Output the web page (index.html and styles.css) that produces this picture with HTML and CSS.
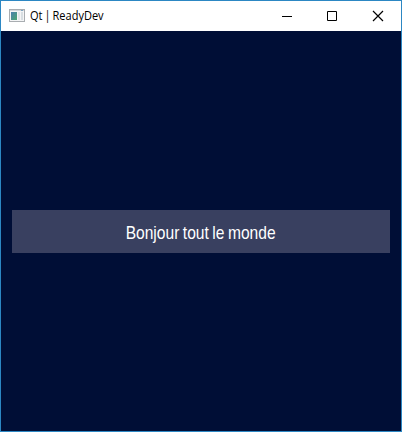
FILE: index.html
```html
<!DOCTYPE html>
<html lang="fr">
<head>
<meta charset="utf-8">
<title>Qt | ReadyDev</title>
<link rel="stylesheet" href="styles.css">
</head>
<body>
<div class="window">
  <header class="titlebar">
    <svg class="app-icon" width="16" height="14" viewBox="0 0 16 14" shape-rendering="crispEdges">
      <defs>
        <linearGradient id="pane" x1="0" y1="0" x2="1" y2="1">
          <stop offset="0" stop-color="#4b7fae"/>
          <stop offset="1" stop-color="#4ba670"/>
        </linearGradient>
      </defs>
      <rect x="0.5" y="0.5" width="15" height="12" fill="#f4f5f6" stroke="#a9adb1"/>
      <rect x="1" y="1" width="14" height="1" fill="#d2d6da"/>
      <rect x="12" y="1" width="2" height="1" fill="#7fa3bd"/>
      <rect x="2" y="3" width="6" height="8" fill="url(#pane)"/>
      <rect x="9" y="3" width="2" height="8" fill="#e2e5e8"/>
      <rect x="12" y="3" width="2" height="8" fill="#d8dee2"/>
    </svg>
    <span class="title">Qt | ReadyDev</span>
    <div class="controls">
      <svg width="45" height="29" viewBox="0 0 45 29"><path d="M17 14.5h10" stroke="#000"/></svg>
      <svg width="45" height="29" viewBox="0 0 45 29"><path d="M17.5 9.5h9v9h-9z" fill="none" stroke="#000"/></svg>
      <svg width="45" height="29" viewBox="0 0 45 29"><path d="M18 9l10 10M28 9l-10 10" stroke="#000" stroke-width="1.2"/></svg>
    </div>
  </header>
  <main class="content"><div class="label"><span class="message">Bonjour tout le monde</span></div></main>
</div>
</body>
</html>
```
FILE: styles.css
```css
body { margin: 0; }
.window { box-sizing: border-box; width: 402px; height: 432px; border: 1px solid #2c87c3; display: flex; flex-direction: column; background: #000e36; }
.titlebar { height: 30px; background: #fff; display: flex; align-items: center; padding: 0 1px 0 8px; box-sizing: border-box; }
.app-icon { margin-bottom: 1px; }
.title { font: 12px "Open Sans", sans-serif; color: #000; margin-left: 5px; flex: 1; transform: scaleX(0.92); transform-origin: left; word-spacing: -1px; padding-bottom: 2px; }
.controls { display: flex; }
.content { flex: 1; display: flex; flex-direction: column; justify-content: center; padding: 0 11px; }
.label { height: 43px; background: #394060; display: flex; align-items: center; justify-content: center; }
.message { font: 19px "Liberation Sans", sans-serif; color: #fff; transform: scaleX(0.82); white-space: nowrap; word-spacing: -1px; padding: 3px 2px 0 0; }
```
